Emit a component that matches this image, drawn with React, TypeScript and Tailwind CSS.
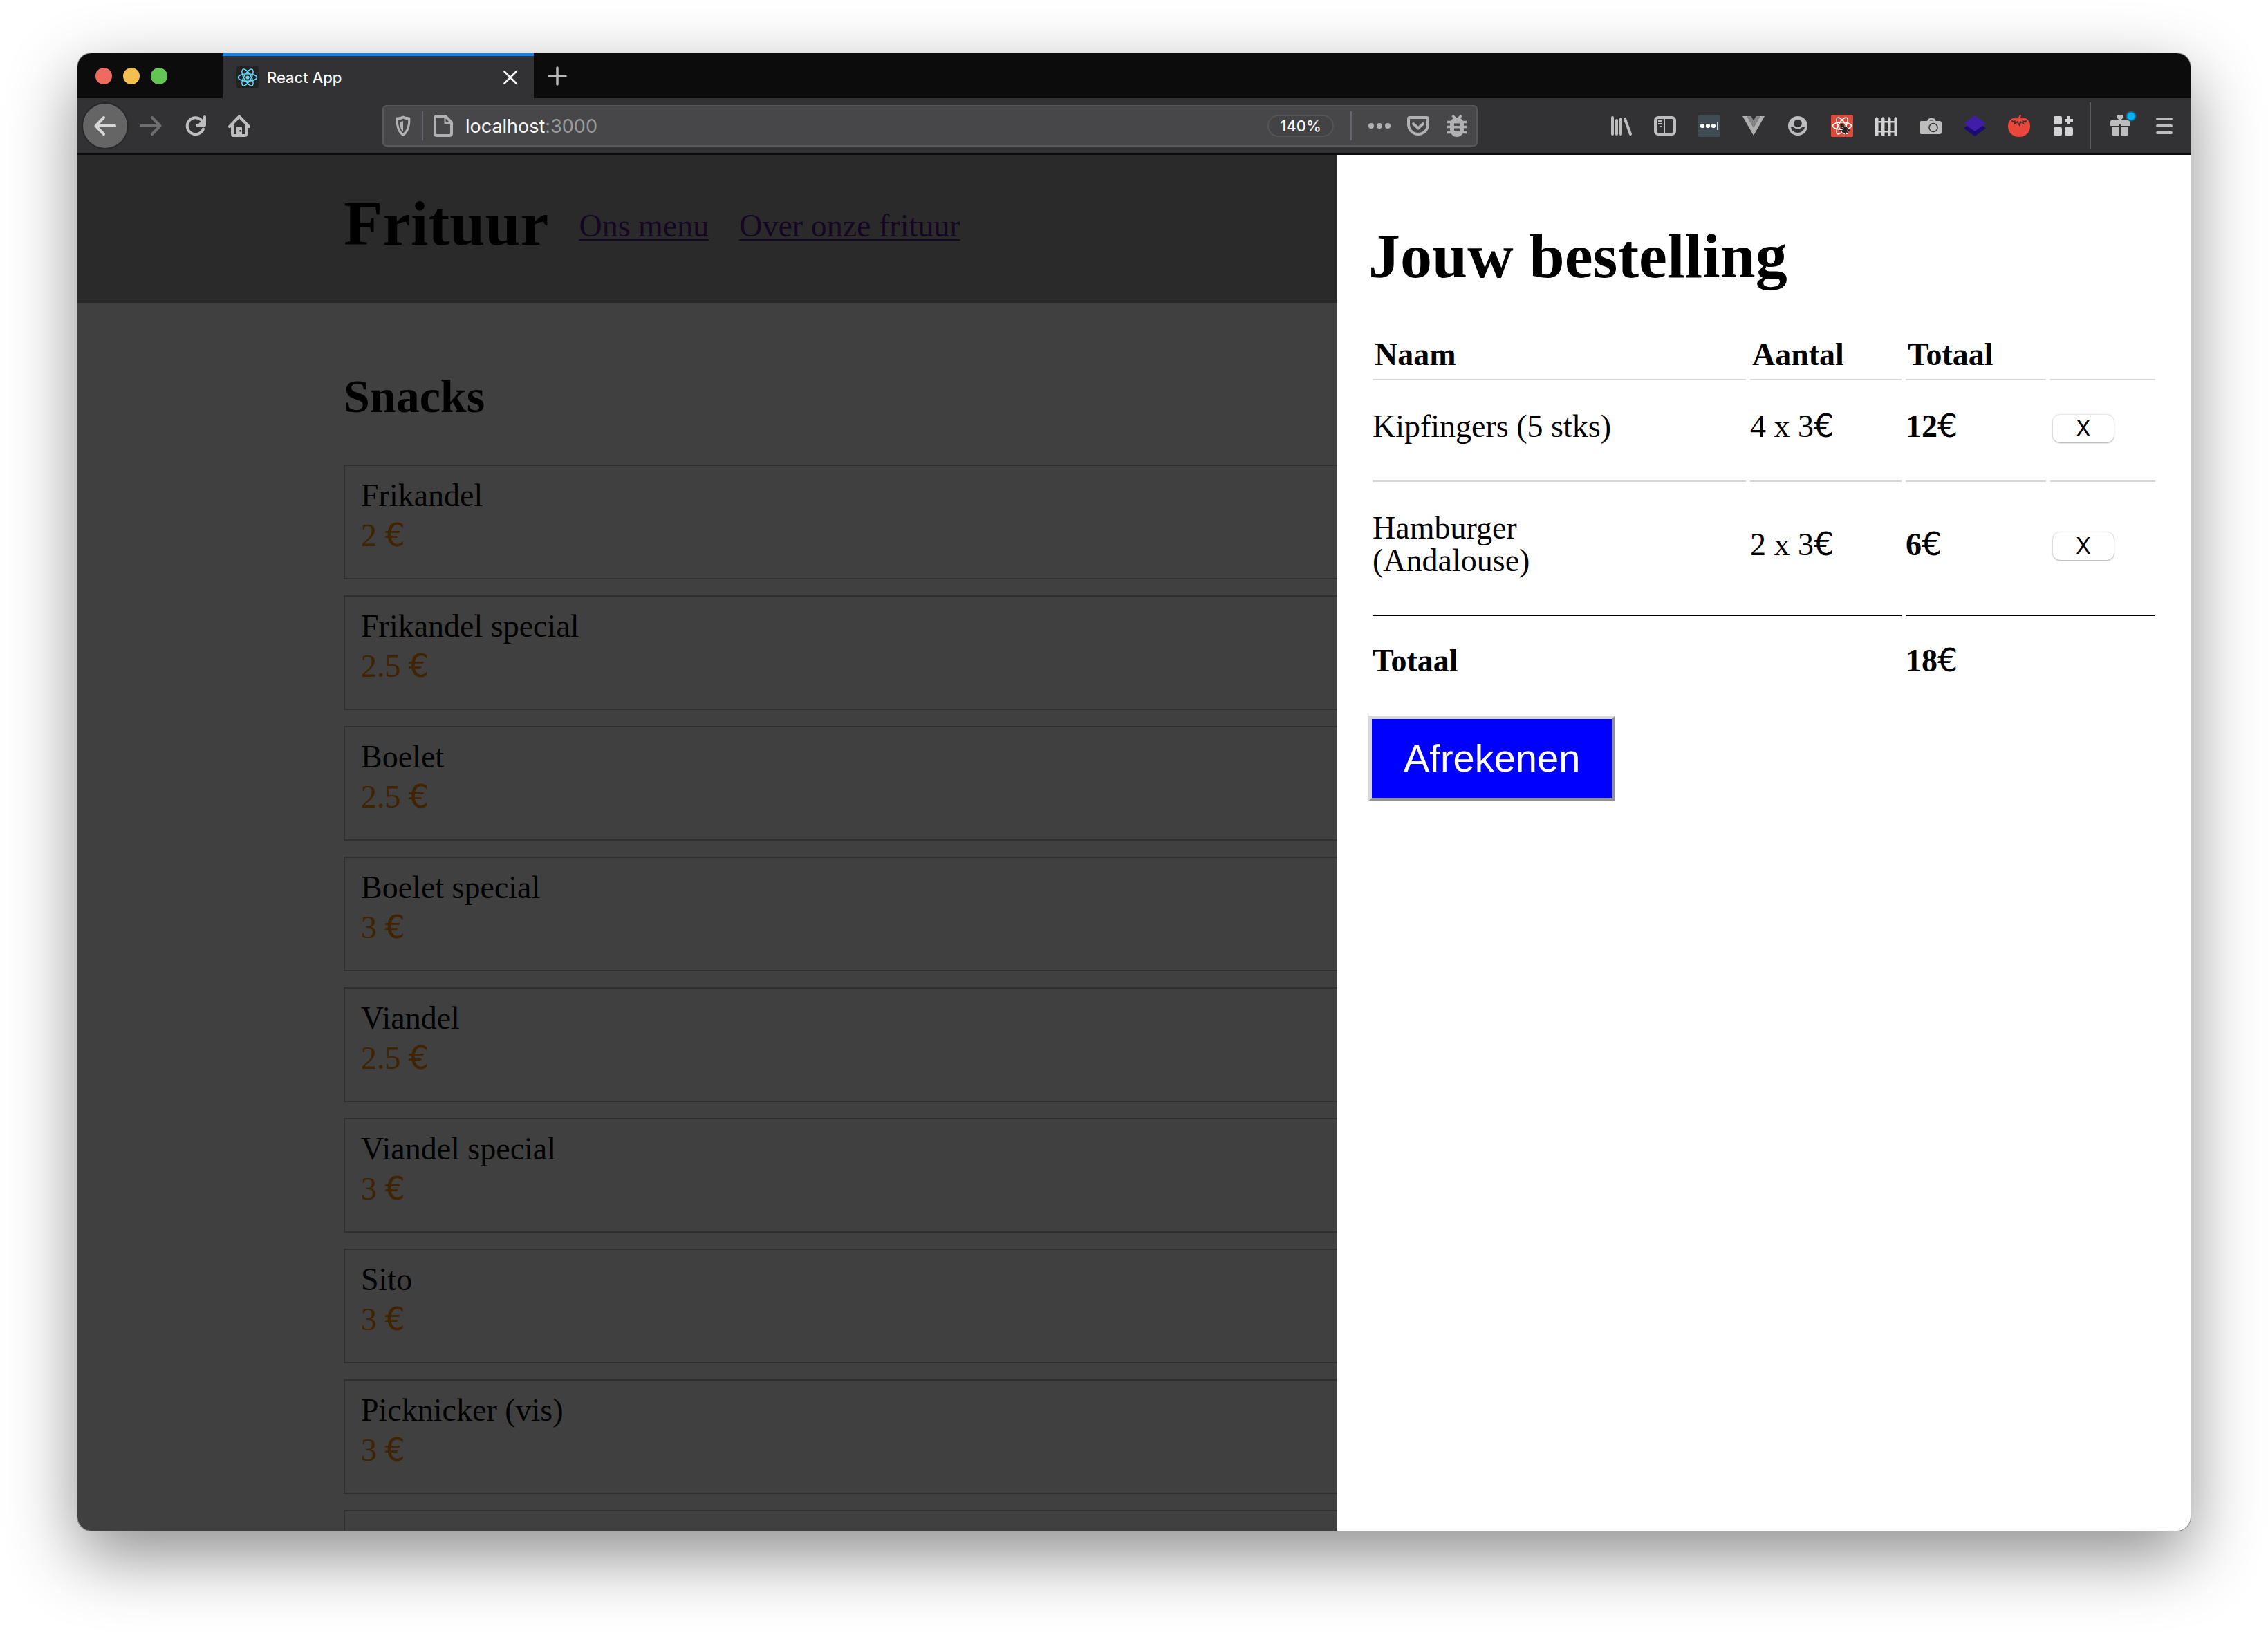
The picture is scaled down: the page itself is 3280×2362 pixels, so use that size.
import React from "react";

const snacks = [
  { name: "Frikandel", price: "2" },
  { name: "Frikandel special", price: "2.5" },
  { name: "Boelet", price: "2.5" },
  { name: "Boelet special", price: "3" },
  { name: "Viandel", price: "2.5" },
  { name: "Viandel special", price: "3" },
  { name: "Sito", price: "3" },
  { name: "Picknicker (vis)", price: "3" },
];

const order = [
  { name: "Kipfingers (5 stks)", amount: "4 x 3", total: "12" },
  { name: "Hamburger (Andalouse)", amount: "2 x 3", total: "6" },
];

function Euro() {
  return <span className="font-['DejaVu_Sans'] leading-none font-normal">€</span>;
}

function ReactMark({ color }: { color: string }) {
  return (
    <g fill="none" stroke={color} strokeWidth="1.5">
      <ellipse cx="16" cy="16" rx="13.5" ry="5.2" />
      <ellipse cx="16" cy="16" rx="13.5" ry="5.2" transform="rotate(60 16 16)" />
      <ellipse cx="16" cy="16" rx="13.5" ry="5.2" transform="rotate(120 16 16)" />
      <circle cx="16" cy="16" r="2.6" fill={color} stroke="none" />
    </g>
  );
}

function Icon({ children }: { children: React.ReactNode }) {
  return (
    <svg viewBox="0 0 32 32" className="size-8 shrink-0 overflow-visible" aria-hidden="true">
      {children}
    </svg>
  );
}

function ToolButton({ label, children }: { label: string; children: React.ReactNode }) {
  return (
    <button type="button" aria-label={label} className="flex size-16 shrink-0 items-center justify-center">
      <Icon>{children}</Icon>
    </button>
  );
}

const extensions: { label: string; art: React.ReactNode }[] = [
  {
    label: "Library",
    art: (
      <g stroke="#bdbdbe" strokeWidth="4" strokeLinecap="round">
        <path d="M4 4v24M10 8v20M16 6v22M22 6l8 22" />
      </g>
    ),
  },
  {
    label: "Sidebars",
    art: (
      <g fill="none" stroke="#bdbdbe">
        <rect x="2" y="4" width="28" height="24" rx="4" strokeWidth="4" />
        <path d="M15 4v24" strokeWidth="2" />
        <path d="M6 9h6M8 13h4M6 13h6M8 17h4" strokeWidth="2" />
      </g>
    ),
  },
  {
    label: "Password manager",
    art: (
      <g fill="#fff">
        <rect width="32" height="32" rx="2" fill="#414b54" />
        <circle cx="6" cy="16" r="3.1" />
        <circle cx="14" cy="16" r="3.1" />
        <circle cx="22" cy="16" r="3.1" />
        <rect x="27" y="10" width="1.8" height="12" fill="#c9cdd0" />
      </g>
    ),
  },
  {
    label: "Vue devtools",
    art: (
      <>
        <path d="M0 2h6.5L16 18.5 25.500 2H32L16 30z" fill="#afafb0" />
        <path d="M6.500 2h6L16 8.300 19.500 2h6L16 18.500z" fill="#868687" />
      </>
    ),
  },
  {
    label: "Account",
    art: (
      <>
        <circle cx="16" cy="16" r="14" fill="#bdbdbe" />
        <path d="M6 18h20c-1 4.800-5 8-10 8s-9-3.200-10-8z" fill="#323234" />
        <circle cx="16" cy="12.500" r="8.200" fill="#bdbdbe" />
        <circle cx="16" cy="12.500" r="5.800" fill="#323234" />
      </>
    ),
  },
  {
    label: "React devtools",
    art: (
      <>
        <rect width="32" height="32" rx="2" fill="#dc4a3a" />
        <ReactMark color="#fff" />
        <circle cx="16" cy="15.500" r="2.800" fill="#222" />
        <g transform="rotate(35 20 22)">
          <rect x="17" y="17" width="6" height="10" rx="3" fill="#222" />
          <path d="M14 18l3 2M14 22.500h12M14 27l4-2M26 18l-3 2M26 27l-4-2" stroke="#222" strokeWidth="1.600" />
        </g>
      </>
    ),
  },
  {
    label: "Fence",
    art: (
      <g fill="#d2d2d3">
        <path d="M0 5l2-2 2.500 2v25H0zM9 5l2-2 2.500 2v25H9zM18 5l2-2 2.500 2v25H18zM27.500 5l2-2 2.500 2v25h-4.500z" />
        <path d="M0 9h32v2.500H0zM0 23h32v2.500H0z" />
      </g>
    ),
  },
  {
    label: "Screenshot",
    art: (
      <>
        <path d="M3 9h8l1.500-2.500Q13.500 5 15 5h5q1.500 0 2.500 1.500L23.500 9H29q3 0 3 3v13q0 3-3 3H3q-3 0-3-3V12q0-3 3-3z" fill="#bdbdbe" />
        <path d="M14.500 8.500l.8-1.500h4.400l.8 1.500z" fill="#323234" />
        <circle cx="20" cy="18.500" r="6" fill="#bdbdbe" stroke="#323234" strokeWidth="1.500" />
      </>
    ),
  },
  {
    label: "Layers",
    art: (
      <>
        <path d="M0 19.500L16 8l16 11.500L16 31z" fill="#190b70" />
        <path d="M0 12.500L16 1l16 11.500L16 24z" fill="#3f1da6" />
      </>
    ),
  },
  {
    label: "Tomato timer",
    art: (
      <>
        <path d="M6 5.500Q11 3 16 5q5-2 10 .5c4 2 6 6 6 11C32 26 25 32 16 32S0 26 0 16.500c0-5 2-9 6-11z" fill="#ea463b" />
        <path d="M5 8.500l7-3 4-1 5 1 6 3-1 3-4-1.500 2 4.500-5-3-2.500 5-3-5-5 3 1-4.500L6 11z" fill="#323234" />
        <path d="M6.500 6.500l8-1.500L17 0l2 .5L18 5l8 1.500-1 2.500-5-1 2 4-4-3-2 4-2-4-4 2 1-3-4 1z" fill="#ea463b" />
      </>
    ),
  },
  {
    label: "Add-ons",
    art: (
      <g fill="#d2d2d3">
        <rect x="2" y="2" width="12" height="12" rx="2" />
        <rect x="2" y="18" width="12" height="12" rx="2" />
        <rect x="18" y="18" width="12" height="12" rx="2" />
        <path d="M22 2h4v4h4v4h-4v4h-4v-4h-4V6h4z" />
      </g>
    ),
  },
];

function TabStrip() {
  return (
    <div className="flex h-[65px] shrink-0 items-center bg-[#0c0c0d]">
      <div className="flex w-[210px] gap-4 pl-[26px]">
        <button type="button" aria-label="Close window" className="size-6 rounded-full bg-[#ed6b5f]" />
        <button type="button" aria-label="Minimise" className="size-6 rounded-full bg-[#f5bf4f]" />
        <button type="button" aria-label="Zoom" className="size-6 rounded-full bg-[#62c554]" />
      </div>
      <div className="flex h-full w-[450px] items-center border-t-4 border-[#0a84ff] bg-[#323234] px-5">
        <svg viewBox="0 0 32 32" className="size-8" aria-hidden="true">
          <rect width="32" height="32" rx="3" fill="#222222" />
          <ReactMark color="#61dafb" />
        </svg>
        <span className="ml-3 flex-1 text-[22px] leading-8 font-medium text-[#f9f9fa]">React App</span>
        <button type="button" aria-label="Close tab" className="flex size-7 items-center justify-center">
          <svg viewBox="0 0 20 20" className="size-5" aria-hidden="true">
            <path d="M1.500 1.500l17 17M18.500 1.500l-17 17" stroke="#f4f4f5" strokeWidth="2.600" strokeLinecap="round" />
          </svg>
        </button>
      </div>
      <button type="button" aria-label="New tab" className="flex size-[68px] items-center justify-center">
        <svg viewBox="0 0 28 28" className="size-7" aria-hidden="true">
          <path d="M14 2v24M2 14h24" stroke="#b8b8b9" strokeWidth="3.500" strokeLinecap="round" />
        </svg>
      </button>
    </div>
  );
}

function Toolbar() {
  return (
    <div className="flex h-[82px] shrink-0 items-center border-b-2 border-[#0c0c0d] bg-[#323234] pl-2">
      <button
        type="button"
        aria-label="Back"
        className="mr-0.5 flex size-16 shrink-0 items-center justify-center rounded-full bg-[#656566] ring-2 ring-[#28282a]"
      >
        <Icon>
          <path d="M30 16H3M14 4L2.500 16 14 28" fill="none" stroke="#d6d6d7" strokeWidth="4" strokeLinecap="round" strokeLinejoin="round" />
        </Icon>
      </button>
      <ToolButton label="Forward">
        <path d="M2 16h27M18 4l11.500 12L18 28" fill="none" stroke="#6d6d6f" strokeWidth="4" strokeLinecap="round" strokeLinejoin="round" />
      </ToolButton>
      <ToolButton label="Reload">
        <path d="M28 20.500A12 12 0 1 1 25 7.500" fill="none" stroke="#bdbdbe" strokeWidth="4" strokeLinecap="round" />
        <path d="M30 3v12H19" fill="none" stroke="#bdbdbe" strokeWidth="4" strokeLinecap="round" strokeLinejoin="round" />
        <path d="M28 6v7h-7z" fill="#bdbdbe" />
      </ToolButton>
      <ToolButton label="Home">
        <path d="M2 17L16 2.500 30 17M6 15v13q0 2 2 2h16q2 0 2-2V15" fill="none" stroke="#bdbdbe" strokeWidth="4" strokeLinecap="round" strokeLinejoin="round" />
        <path d="M12 30V19q0-2 2-2h4q2 0 2 2v11z" fill="#bdbdbe" />
        <rect x="16.500" y="22" width="2" height="2.500" fill="#323234" />
      </ToolButton>
      <div className="ml-[175px] flex h-[60px] max-w-[1584px] flex-1 items-center rounded-md border-2 border-[#58585a] bg-[#474749] pl-3">
        <Icon>
          <path d="M16 3.500c3.500 1.700 7.500 2 11 2 .4 11-2.500 19-11 23.500C7.500 24.500 4.600 16.500 5 5.500c3.500 0 7.500-.3 11-2z" transform="translate(3.200 0) scale(.8 1)" fill="none" stroke="#b1b1b3" strokeWidth="3.800" strokeLinejoin="round" />
          <path d="M16 9v15c-3-2-4.500-5.500-4.500-13.500z" fill="#b1b1b3" />
        </Icon>
        <span className="mr-[13px] ml-[11px] h-[42px] w-0.5 bg-[#636571]" />
        <Icon>
          <path d="M6 2h13l9 9v16q0 3-3 3H7q-3 0-3-3V5q0-3 3-3z" fill="none" stroke="#b1b1b3" strokeWidth="4" strokeLinejoin="round" />
          <path d="M18.500 3v9H28" fill="none" stroke="#b1b1b3" strokeWidth="2" />
        </Icon>
        <div className="ml-4 flex-1 pt-0.5 text-[27px] leading-8 text-[#9a9a9c]">
          <span className="text-[#f9f9fa]">localhost</span>:3000
        </div>
        <button
          type="button"
          className="flex h-8 w-24 items-center justify-center rounded-full border-2 border-[#545456] bg-[#434345] text-[22px] leading-7 font-medium text-[#f9f9fa]"
        >
          140%
        </button>
        <span className="ml-6 h-[42px] w-0.5 bg-[#636571]" />
        <div className="ml-6 flex items-center gap-6 pr-3">
          <Icon>
            <g fill="#b1b1b3">
              <circle cx="4" cy="16" r="4" />
              <circle cx="16" cy="16" r="4" />
              <circle cx="28" cy="16" r="4" />
            </g>
          </Icon>
          <Icon>
            <path d="M4 4h24q2 0 2 2v8a14 14 0 0 1-28 0V6q0-2 2-2z" fill="none" stroke="#b1b1b3" strokeWidth="4" />
            <path d="M9 13l7 6.500 7-6.500" fill="none" stroke="#b1b1b3" strokeWidth="4" strokeLinecap="round" strokeLinejoin="round" />
          </Icon>
          <Icon>
            <path d="M9.500 1l4 4M22.500 1l-4 4M2 10.500h28M2 17.500h28M2 25.500h28" stroke="#b1b1b3" strokeWidth="3.500" />
            <path d="M16 4c6 0 10 4 10 10v7c0 6-4 11-10 11S6 27 6 21v-7C6 8 10 4 16 4z" fill="#b1b1b3" />
            <path d="M12 12.500h8v3.500h-8zM12 19.500h8V23h-8z" fill="#474749" />
          </Icon>
        </div>
      </div>
      <div className="ml-auto flex shrink-0 items-center">
        {extensions.map((item) => (
          <ToolButton key={item.label} label={item.label}>
            {item.art}
          </ToolButton>
        ))}
        <span className="ml-1.5 h-[68px] w-0.5 bg-[#5b5b5d]" />
        <span className="w-2.5" />
        <ToolButton label="What's new">
          <g fill="#bdbdbe">
            <path d="M16 8.500L11.500 4.500a2.600 2.600 0 0 1 4.500-3 2.600 2.600 0 0 1 4.500 3z" />
            <path d="M4 8h24q2 0 2 2v6H17v-2h-2v2H2v-6q0-2 2-2z" />
            <path d="M4 18h10v12H6q-2 0-2-2zM18 18h10v10q0 2-2 2h-8z" />
          </g>
          <circle cx="32" cy="2" r="7.500" fill="#1f6480" />
          <circle cx="32" cy="2" r="5.500" fill="#00b3ff" />
        </ToolButton>
        <ToolButton label="Open menu">
          <path d="M6 6h20M6 16h20M6 26h20" stroke="#bdbdbe" strokeWidth="4" strokeLinecap="round" />
        </ToolButton>
        <span className="w-1.5" />
      </div>
    </div>
  );
}

function MenuPage() {
  return (
    <div className="flex-1 bg-white font-['Liberation_Serif',serif] text-[46px] leading-[52px] text-black">
      <header className="h-[214px] bg-[#a9a9a9] pt-[47px] pl-[385px]">
        <div className="flex items-center">
          <h1 className="text-[92px] leading-[104px] font-bold">Frituur</h1>
          <nav className="ml-11 flex gap-11 pt-2 text-[#551a8b]">
            <a href="#menu" className="underline decoration-2 underline-offset-4">Ons menu</a>
            <a href="#over" className="underline decoration-2 underline-offset-4">Over onze frituur</a>
          </nav>
        </div>
      </header>
      <main className="pt-[97px] pl-[385px]">
        <h2 className="text-[68px] leading-[76px] font-bold">Snacks</h2>
        <ul className="mt-[61px] flex flex-col gap-[23px]">
          {snacks.map((snack) => (
            <li key={snack.name} className="h-[166px] shrink-0 border-2 border-[#bbbbbb] px-[23px] pt-3.5">
              <div className="leading-[58px]">{snack.name}</div>
              <div className="leading-[58px] text-[#ff8c00]">
                {snack.price} <Euro />
              </div>
            </li>
          ))}
          <li className="h-[166px] shrink-0 border-2 border-[#bbbbbb]" />
        </ul>
      </main>
    </div>
  );
}

function OrderPanel() {
  return (
    <aside className="absolute inset-y-0 right-0 w-[1234px] max-w-full bg-white px-[45px] pt-[94px] font-['Liberation_Serif',serif] text-[46px] leading-[47px] text-black">
      <h1 className="text-[92px] leading-[104px] font-bold">Jouw bestelling</h1>
      <table className="mt-[58px] w-full table-fixed border-separate border-spacing-[6px] text-left">
        <colgroup>
          <col className="w-[540px]" />
          <col className="w-[219px]" />
          <col className="w-[203px]" />
          <col />
        </colgroup>
        <thead>
          <tr>
            {["Naam", "Aantal", "Totaal", ""].map((title) => (
              <th key={title} className="h-16 border-b-2 border-[#d8d8d8] px-[3px] pb-3 align-bottom font-bold">
                {title}
              </th>
            ))}
          </tr>
        </thead>
        <tbody>
          {order.map((line) => (
            <tr key={line.name} className="*:border-b-2 *:border-[#d8d8d8] *:pt-[37px] *:pb-[55px] last:*:border-b-0 last:*:pb-[49px]">
              <td className="pr-40">{line.name}</td>
              <td>{line.amount}<Euro /></td>
              <td><b>{line.total}</b><Euro /></td>
              <td>
                <button
                  type="button"
                  aria-label={`X, verwijder ${line.name}`}
                  className="mt-1.5 ml-1 flex h-10 w-[88px] items-center justify-center rounded-[10px] bg-white font-['Inter',sans-serif] text-[32px] leading-none shadow-[0_0_2px_1px_rgba(0,0,0,0.1),0_1px_2px_rgba(0,0,0,0.25)]"
                >
                  X
                </button>
              </td>
            </tr>
          ))}
        </tbody>
        <tfoot>
          <tr className="*:border-t-2 *:border-black *:pt-[41px]">
            <td colSpan={2} className="font-bold">Totaal</td>
            <td colSpan={2}><b>18</b><Euro /></td>
          </tr>
        </tfoot>
      </table>
      <button
        type="button"
        className="mt-[50px] h-[124px] border-[5px] border-t-[#d8d8d8] border-r-[#909090] border-b-[#909090] border-l-[#d8d8d8] bg-[#0000ff] px-[46px] font-['Liberation_Sans',sans-serif] text-[56px] leading-none text-white"
      >
        Afrekenen
      </button>
    </aside>
  );
}

export default function App() {
  return (
    <div className="flex h-screen flex-col bg-white px-28 pt-[77px] pb-[148px] font-['Inter',sans-serif]">
      <div className="flex min-h-0 flex-1 flex-col overflow-hidden rounded-[20px] shadow-[0_0_0_1px_rgba(0,0,0,0.35),0_36px_100px_rgba(0,0,0,0.45)]">
        <TabStrip />
        <Toolbar />
        <div className="relative flex min-h-0 flex-1 overflow-hidden">
          <MenuPage />
          <div className="absolute inset-0 bg-black/75" />
          <OrderPanel />
        </div>
      </div>
    </div>
  );
}
